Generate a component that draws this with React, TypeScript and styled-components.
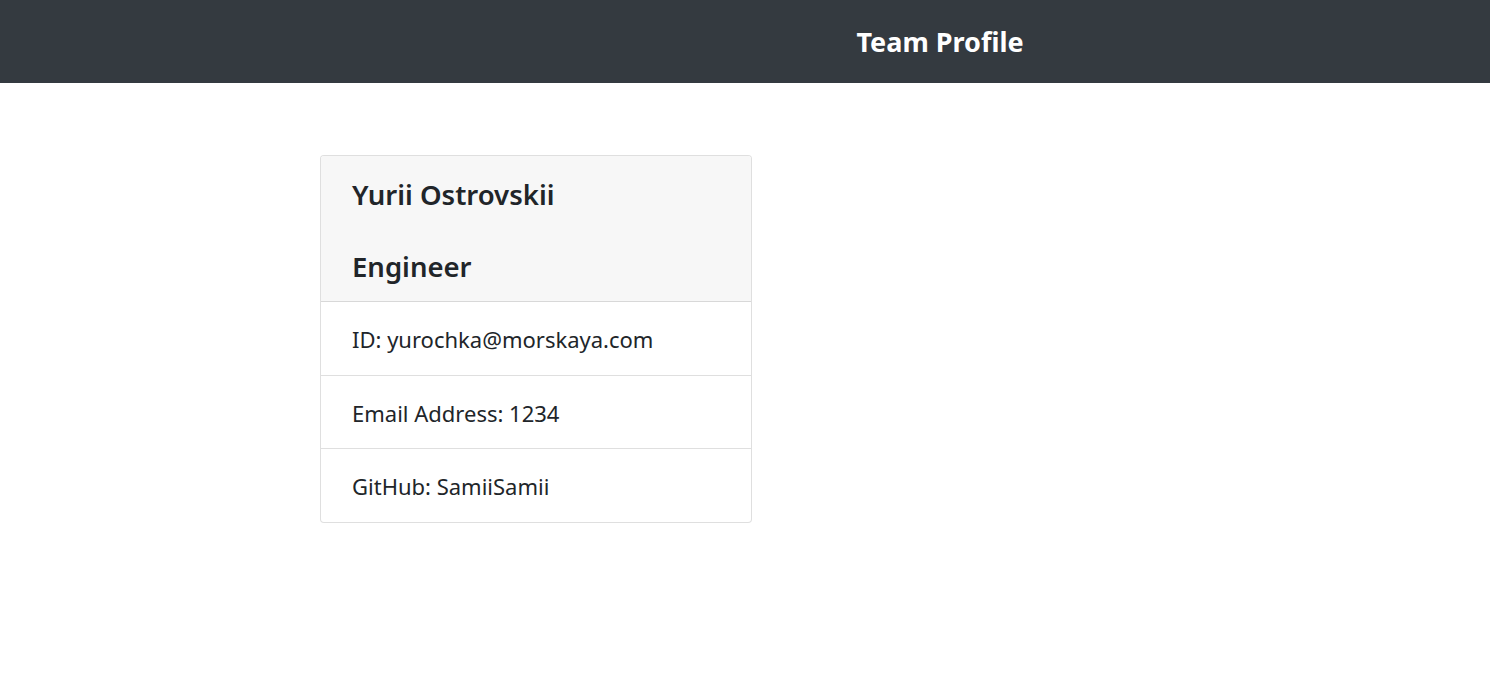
import React from "react";
import styled, { createGlobalStyle } from "styled-components";

const GlobalStyle = createGlobalStyle`
  html, body { margin: 0; padding: 0; background: #fff; }
  body {
    font-family: "Noto Sans", "Open Sans", sans-serif;
    color: #212529;
  }
  * { box-sizing: border-box; }
`;

const NavBar = styled.header`
  height: 83px;
  background: #343a40;
  display: flex;
  align-items: center;
  justify-content: center;
  padding-left: 390px;
  padding-top: 2px;
`;

const Brand = styled.h1`
  margin: 0;
  color: #fff;
  font-size: 27px;
  font-weight: 700;
  line-height: 1.2;
`;

const Main = styled.main`
  padding: 72px 0 0 320px;
`;

const Card = styled.section`
  width: 432px;
  border: 1px solid rgba(0, 0, 0, 0.125);
  border-radius: 4px;
  overflow: hidden;
  background: #fff;
`;

const CardHeader = styled.div`
  background: #f7f7f7;
  padding: 21.5px 31px 17.5px;
  display: flex;
  flex-direction: column;
  gap: 38px;
  border-bottom: 1px solid rgba(0, 0, 0, 0.125);
`;

const Heading = styled.h3`
  margin: 0;
  font-size: 27.5px;
  font-weight: 600;
  line-height: 34px;
`;

const List = styled.ul`
  list-style: none;
  margin: 0;
  padding: 0;
`;

const Item = styled.li`
  padding: 22px 31px 20.5px;
  font-size: 22px;
  line-height: 30px;
  & + & {
    border-top: 1px solid rgba(0, 0, 0, 0.125);
  }
`;

export default function App() {
  return (
    <>
      <GlobalStyle />
      <NavBar>
        <Brand>Team Profile</Brand>
      </NavBar>
      <Main>
        <Card>
          <CardHeader>
            <Heading>Yurii Ostrovskii</Heading>
            <Heading>Engineer</Heading>
          </CardHeader>
          <List>
            <Item>ID: yurochka@morskaya.com</Item>
            <Item>Email Address: 1234</Item>
            <Item>GitHub: SamiiSamii</Item>
          </List>
        </Card>
      </Main>
    </>
  );
}
